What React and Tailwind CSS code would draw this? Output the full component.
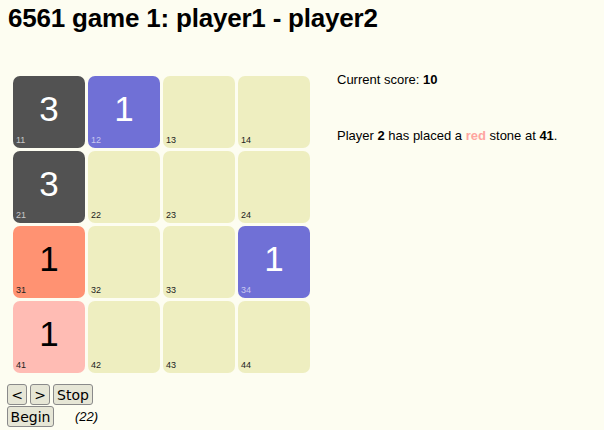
import React from "react";

const cells = [
  { id: 11, kind: "dark", n: 3 },
  { id: 12, kind: "blue", n: 1 },
  { id: 13 },
  { id: 14 },
  { id: 21, kind: "dark", n: 3 },
  { id: 22 },
  { id: 23 },
  { id: 24 },
  { id: 31, kind: "orange", n: 1 },
  { id: 32 },
  { id: 33 },
  { id: 34, kind: "blue", n: 1 },
  { id: 41, kind: "pink", n: 1 },
  { id: 42 },
  { id: 43 },
  { id: 44 },
];

const styles = {
  dark: { box: "bg-[#525252]", num: "text-white", label: "text-[#c8c8c8]" },
  blue: { box: "bg-[#7070d6]", num: "text-white", label: "text-[#c8c8f0]" },
  orange: { box: "bg-[#ff9272]", num: "text-black", label: "text-[#222]" },
  pink: { box: "bg-[#ffbcb4]", num: "text-black", label: "text-[#222]" },
  empty: { box: "bg-[#eeeec0]", num: "text-black", label: "text-[#222]" },
};

function Cell({ id, kind = "empty", n }) {
  const s = styles[kind];
  return (
    <div className={`relative w-[72px] h-[72px] rounded-[7px] ${s.box}`}>
      {n != null && (
        <div className={`absolute inset-x-0 top-[15px] text-center text-[35px] leading-[36px] ${s.num}`}>
          {n}
        </div>
      )}
      <div className={`absolute left-[3px] bottom-[3px] text-[9px] leading-[10px] ${s.label}`}>
        {id}
      </div>
    </div>
  );
}

function Btn({ w, children }) {
  return (
    <button
      className={`h-[21px] ${w} rounded-[3px] border border-[#8a8a8a] bg-[#e6e6d6] text-[14px] leading-[16px] text-black text-center font-['DejaVu_Sans',sans-serif]`}
    >
      {children}
    </button>
  );
}

export default function App() {
  return (
    <div className="w-[604px] h-[430px] bg-[#fdfdf1] font-['Liberation_Sans',Arial,sans-serif] text-black overflow-hidden">
      <h1 className="pl-[8px] pt-[2px] text-[26px] leading-[32px] font-bold tracking-[-0.2px]">
        6561 game 1: player1 - player2
      </h1>

      <div className="flex mt-[42px]">
        <div className="ml-[13px] grid grid-cols-4 gap-[3px] w-[297px]">
          {cells.map((c) => (
            <Cell key={c.id} {...c} />
          ))}
        </div>

        <div className="ml-[27px] text-[13px] leading-[16px]">
          <p className="mt-[-4px]">
            Current score: <b>10</b>
          </p>
          <p className="mt-[40px]">
            Player <b>2</b> has placed a{" "}
            <b className="text-[#ffa5a0]">red</b> stone at <b>41</b>.
          </p>
        </div>
      </div>

      <div className="pl-[7px] mt-[11px] flex flex-col gap-[1px]">
        <div className="flex gap-[3px]">
          <Btn w="w-[20px]">&lt;</Btn>
          <Btn w="w-[20px]">&gt;</Btn>
          <Btn w="w-[40px]">Stop</Btn>
        </div>
        <div className="flex items-center">
          <Btn w="w-[47px]">Begin</Btn>
          <span className="ml-[21px] italic text-[13px]">(22)</span>
        </div>
      </div>
    </div>
  );
}
